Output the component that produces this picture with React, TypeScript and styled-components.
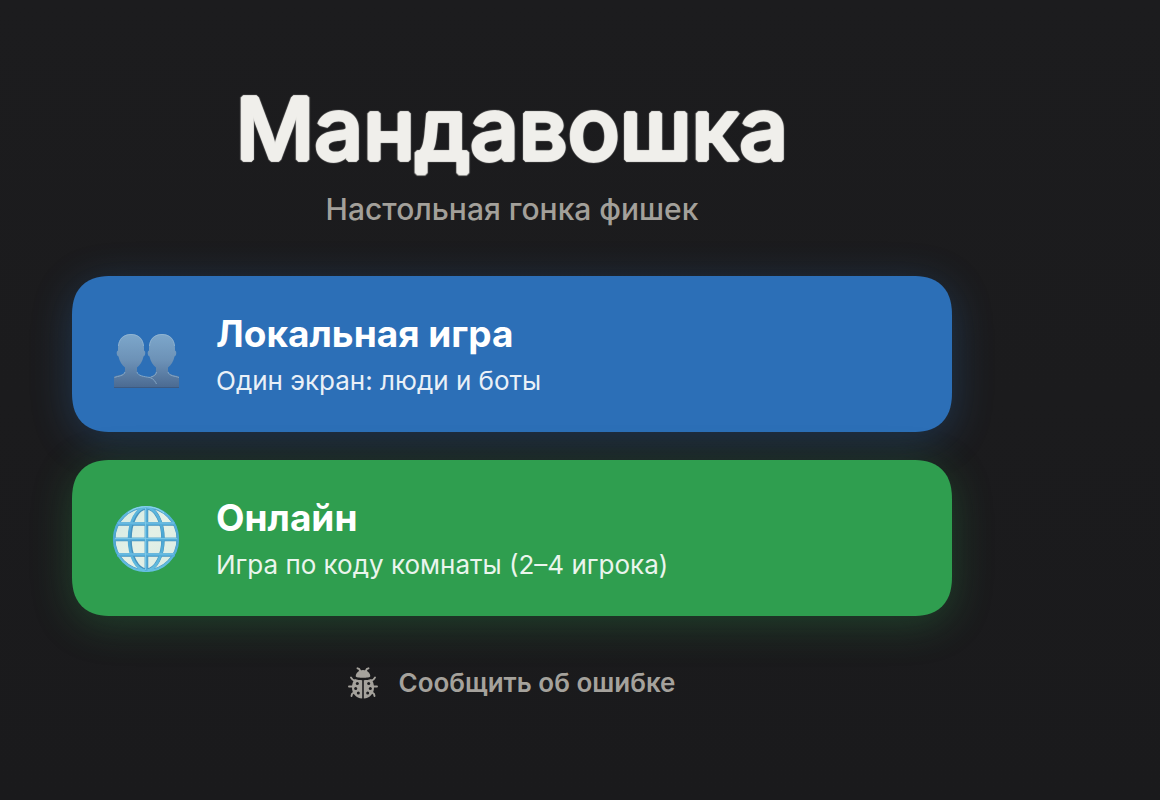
import React from "react";
import styled, { createGlobalStyle } from "styled-components";

const GlobalStyle = createGlobalStyle`
  * {
    box-sizing: border-box;
  }
  body {
    margin: 0;
    background: #1c1c1e;
    font-family: Inter, "Noto Sans", sans-serif;
    -webkit-font-smoothing: antialiased;
  }
`;

const Page = styled.main`
  display: flex;
  flex-direction: column;
  min-height: 100vh;
  padding: 75px 208px 80px 72px;
  background: linear-gradient(#1c1c1e, #1a1a1c);
`;

const Header = styled.header`
  display: flex;
  flex-direction: column;
  align-items: center;
  margin-bottom: 49px;
  text-align: center;
`;

/* The ring of tight shadows thickens the strokes and rounds their ends. */
const Title = styled.h1`
  margin: 0;
  color: #f0efeb;
  font-size: 86px;
  font-weight: 500;
  line-height: 108px;
  white-space: nowrap;
  text-shadow:
    2px 0 1px #f0efeb,
    -2px 0 1px #f0efeb,
    0 2px 1px #f0efeb,
    0 -2px 1px #f0efeb,
    1px 1px 1px #f0efeb,
    -1px 1px 1px #f0efeb,
    1px -1px 1px #f0efeb,
    -1px -1px 1px #f0efeb;
`;

const Subtitle = styled.p`
  margin: 8px 0 0;
  color: #a3a09a;
  font-size: 30px;
  font-weight: 500;
  line-height: 36px;
`;

const Modes = styled.nav`
  display: flex;
  flex-direction: column;
  gap: 28px;
`;

const ModeButton = styled.button<{ $fill: string; $glow: string }>`
  display: flex;
  align-items: center;
  gap: 36px;
  width: 100%;
  min-height: 156px;
  padding: 32px 40px;
  border: 0;
  border-radius: 40px;
  corner-shape: superellipse(1.3);
  background: ${(p) => p.$fill};
  box-shadow: 0 8px 40px ${(p) => p.$glow};
  color: #fff;
  font-family: inherit;
  text-align: left;
  cursor: pointer;
`;

const ModeIcon = styled.svg`
  flex: none;
  width: 68px;
  height: 70px;
`;

const ModeText = styled.span`
  display: flex;
  flex-direction: column;
  gap: 8px;
`;

const ModeName = styled.span`
  font-size: 37px;
  font-weight: 700;
  line-height: 46px;
`;

const ModeHint = styled.span`
  font-size: 26px;
  font-weight: 400;
  line-height: 32px;
  opacity: 0.9;
`;

const ReportButton = styled.button`
  display: flex;
  align-items: center;
  align-self: center;
  gap: 20px;
  margin-top: 49px;
  padding: 0;
  border: 0;
  background: none;
  color: #a5a29c;
  font-family: inherit;
  font-size: 26px;
  font-weight: 600;
  line-height: 36px;
  cursor: pointer;
`;

const BugSvg = styled.svg`
  flex: none;
  width: 30px;
  height: 32px;
`;

const PeopleIcon = () => (
  <ModeIcon viewBox="-1 -6 68 70" aria-hidden="true">
    <defs>
      <linearGradient id="people-fill" x1="0" y1="8" x2="0" y2="62" gradientUnits="userSpaceOnUse">
        <stop offset="0" stopColor="#7da7cb" />
        <stop offset="0.5" stopColor="#6c91b6" />
        <stop offset="1" stopColor="#4a6991" />
      </linearGradient>
    </defs>
    <g fill="url(#people-fill)" transform="translate(0 1)">
      <path d="M49 8C57 8 62 13.500 62 22V24.500C64 25 63.500 30 61.500 30.500C60.500 35.500 58 39 55 41.500V45C55 50 66 49 66 51V62H34V52C37 50 43 50 43 45V41.500C40 39 37.500 35.500 36.500 30.500C34.500 30 34 25 36 24.500V22C36 13.500 41 8 49 8Z" />
      <path d="M18 8C26 8 31 13.500 31 22V24.500C33 25 32.500 30 30.500 30.500C29.500 35.500 27 39 24 41.500V45C24 50 30 50 36 51.500C41 53 43 57 44 62H1V51C1 49 12 50 12 45V41.500C9 39 6.500 35.500 5.500 30.500C3.500 30 3 25 5 24.500V22C5 13.500 10 8 18 8Z" />
    </g>
    <g fill="none" stroke="#9abbd6" strokeWidth="1" opacity="0.7" transform="translate(0 1)">
      <path d="M5.500 20C6 13 10.500 8.500 18 8.500S30 13 30.500 20" />
      <path d="M36.500 20C37 13 41.500 8.500 49 8.500S61 13 61.500 20" />
      <path d="M1.500 51.500C5 50 11 50 12 46M24 46C25 50 31 50.500 37 51.500C41 53 42.500 56 43.500 58M38 51C41 50 43 49 43.500 46M55 46C56 50 62 50 66 51.500" />
    </g>
    <path d="M1 62.500H66" stroke="#3d5a81" strokeWidth="1" />
  </ModeIcon>
);

const GlobeIcon = () => (
  <ModeIcon viewBox="0 -2 68 70" aria-hidden="true">
    <defs>
      <linearGradient id="globe-face" x1="0" y1="0" x2="1" y2="1">
        <stop offset="0" stopColor="#d0e9e4" />
        <stop offset="0.5" stopColor="#e5f1e6" />
        <stop offset="1" stopColor="#d8ebe4" />
      </linearGradient>
      <linearGradient id="globe-line" x1="0" y1="0" x2="0" y2="68" gradientUnits="userSpaceOnUse">
        <stop offset="0" stopColor="#62bce0" />
        <stop offset="0.5" stopColor="#4aa5d3" />
        <stop offset="1" stopColor="#67c1e2" />
      </linearGradient>
    </defs>
    <circle cx="34" cy="34" r="32.500" fill="url(#globe-face)" />
    <g fill="none" stroke="#4693be" strokeWidth="3.500">
      <circle cx="34" cy="34" r="31.500" strokeWidth="2" />
      <ellipse cx="34.500" cy="34" rx="16.500" ry="31" />
      <path d="M34.500 2V66M5 19H63M2 34.500H66M5 50H63" />
    </g>
    <g fill="none" stroke="url(#globe-line)" strokeWidth="2.600">
      <circle cx="34" cy="34" r="32" strokeWidth="2.200" />
      <ellipse cx="34" cy="34" rx="17" ry="31.500" />
    </g>
    <path d="M32.800 2H35.500V66H32.800ZM5 17.200H63V20H5ZM2 32.800H66V35.500H2ZM5 48.200H63V51H5Z" fill="#55aeda" />
    <path d="M33.500 3V65M6 18H62M3 33.500H65M6 49H62" stroke="#83cbe8" strokeWidth="0.800" fill="none" />
    <path d="M16 8C21 3.500 27 1.800 34 1.800S47 3.500 52 8" stroke="#93d8ec" strokeWidth="1" fill="none" />
  </ModeIcon>
);

const BugIcon = () => (
  <BugSvg viewBox="0 0 30 32" aria-hidden="true" fill="currentColor">
    <g fill="none" stroke="currentColor" strokeWidth="1.900" strokeLinecap="round" strokeLinejoin="round">
      <path d="M9.500 1.300L11 1.800L12.500 4.500M20.500 1.300L19 1.800L17.500 4.500M3 10.500L4.500 12.500L7 14M27 10.500L25.500 12.500L23 14M1 19.500H6M29 19.500H24M3.500 29L4 27L7 24.500M26.500 29L26 27L23 24.500" />
    </g>
    <path d="M15 3C19 3 22.300 6 22.300 9.300C22.300 11.300 7.700 11.300 7.700 9.300C7.700 6 11 3 15 3Z" />
    <path d="M6.800 12C9 12.800 12 13.200 14.200 13.200V31.500C8 31 4 26.500 4 20.500C4 17 5 14 6.800 12ZM23.200 12C21 12.800 18 13.200 15.800 13.200V31.500C22 31 26 26.500 26 20.500C26 17 25 14 23.200 12Z" />
    <g fill="#1c1c1e">
      <circle cx="9.300" cy="16.500" r="1.500" />
      <circle cx="7.700" cy="21.500" r="1.500" />
      <circle cx="10.300" cy="26" r="1.500" />
      <circle cx="20.700" cy="16.500" r="1.500" />
      <circle cx="22.300" cy="21.500" r="1.500" />
      <circle cx="19.700" cy="26" r="1.500" />
    </g>
  </BugSvg>
);

export default function App() {
  return (
    <>
      <GlobalStyle />
      <Page>
        <Header>
          <Title>Мандавошка</Title>
          <Subtitle>Настольная гонка фишек</Subtitle>
        </Header>
        <Modes aria-label="Мандавошка">
          <ModeButton type="button" $fill="#2c6fb7" $glow="rgba(44, 111, 183, 0.32)">
            <PeopleIcon />
            <ModeText>
              <ModeName>Локальная игра</ModeName>
              <ModeHint>Один экран: люди и боты</ModeHint>
            </ModeText>
          </ModeButton>
          <ModeButton type="button" $fill="#2f9e4f" $glow="rgba(47, 158, 79, 0.3)">
            <GlobeIcon />
            <ModeText>
              <ModeName>Онлайн</ModeName>
              <ModeHint>Игра по коду комнаты (2–4 игрока)</ModeHint>
            </ModeText>
          </ModeButton>
        </Modes>
        <ReportButton type="button">
          <BugIcon />
          Сообщить об ошибке
        </ReportButton>
      </Page>
    </>
  );
}
